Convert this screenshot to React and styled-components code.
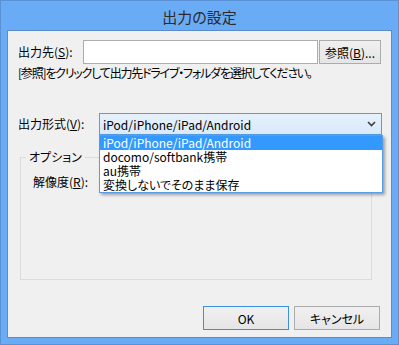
import React from 'react';
import styled, { createGlobalStyle } from 'styled-components';

const GlobalStyle = createGlobalStyle`
    html, body {
        margin: 0;
        padding: 0;
        background: #6aabf5;
    }
    body {
        font-family: "Noto Sans CJK JP", "Noto Sans", sans-serif;
        font-size: 12px;
        font-feature-settings: "palt";
        color: #000;
    }
`

const Frame = styled.div`
    width: 399px;
    height: 345px;
    box-sizing: border-box;
    border: 1px solid #5a91d4;
    background: #6aabf5;
    display: flex;
    flex-direction: column;
`

const TitleBar = styled.div`
    height: 29px;
    box-sizing: border-box;
    padding-top: 2px;
    display: flex;
    align-items: center;
    justify-content: center;
    font-size: 15px;
    color: #2b2b2b;
`

const Client = styled.div`
    margin: 0 6px 6px;
    height: 308px;
    box-sizing: border-box;
    border: 1px solid #5a8ccc;
    background: #f0f0f0;
    display: flex;
    flex-direction: column;
    padding-top: 9px;
`

const Row = styled.div`
    display: flex;
    align-items: center;
    padding-left: ${props => props.indent || 10}px;
    margin-top: ${props => props.top || 0}px;
`

const Label = styled.span`
    width: ${props => props.width}px;
    flex-shrink: 0;
    line-height: 14px;
    white-space: nowrap;
`

const Key = styled.span`
    text-decoration: underline;
    text-underline-offset: 1px;
`

const TextInput = styled.div`
    width: 235px;
    height: 24px;
    box-sizing: border-box;
    background: #fff;
    border: 1px solid #abadb3;
`

const Button = styled.div`
    width: ${props => props.width}px;
    height: ${props => props.height || 24}px;
    box-sizing: border-box;
    border: 1px solid ${props => props.isDefault ? '#3c8fe6' : '#acacac'};
    background: linear-gradient(#f0f0f0, #e5e5e5);
    display: flex;
    align-items: center;
    justify-content: center;
    white-space: nowrap;
`

const BrowseButton = styled(Button)`
    margin-left: 1px;
`

const Help = styled.div`
    margin-top: 2px;
    padding-left: 10px;
    line-height: 14px;
    letter-spacing: -1.2px;
    white-space: nowrap;
`

const SelectWrap = styled.div`
    position: relative;
`

const Select = styled.div`
    width: ${props => props.width}px;
    height: 22px;
    box-sizing: border-box;
    border: 1px solid ${props => props.open ? '#569de5' : '#acacac'};
    background: ${props => props.open ? 'linear-gradient(#e6f1fc, #d9eafb)' : 'linear-gradient(#f0f0f0, #e5e5e5)'};
    display: flex;
    align-items: center;
    padding: 0 5px 0 3px;
    justify-content: space-between;
`

const DropList = styled.div`
    position: absolute;
    top: 100%;
    left: 0;
    width: 284px;
    box-sizing: border-box;
    border: 1px solid #569de5;
    background: #fff;
    box-shadow: 2px 2px 3px rgba(0, 0, 0, 0.35);
    z-index: 2;
`

const Item = styled.div`
    height: 14px;
    line-height: 14px;
    padding-left: 3px;
    white-space: nowrap;
    background: ${props => props.selected ? '#3399ff' : 'transparent'};
    color: ${props => props.selected ? '#fff' : '#000'};
`

const Group = styled.div`
    position: relative;
    margin: 22px 0 0 12px;
    width: 352px;
    height: 123px;
    box-sizing: border-box;
    border: 1px solid #dcdcdc;
    padding-top: 13px;
`

const GroupTitle = styled.span`
    position: absolute;
    top: -8px;
    left: 5px;
    padding: 0 3px;
    background: #f0f0f0;
    line-height: 14px;
`

const Footer = styled.div`
    margin-top: auto;
    display: flex;
    justify-content: flex-end;
    gap: 5px;
    padding: 0 11px 7px 0;
`

const Chevron = () => (
    <svg width="9" height="6" viewBox="0 0 9 6">
        <path d="M1 1 L4.5 4.5 L8 1" fill="none" stroke="#404040" strokeWidth="1.6" />
    </svg>
);

const formats = [
    'iPod/iPhone/iPad/Android',
    'docomo/softbank携帯',
    'au携帯',
    '変換しないでそのまま保存'
];

const App = () => {
    return (
        <>
            <GlobalStyle />
            <Frame>
                <TitleBar>出力の設定</TitleBar>
                <Client>
                    <Row>
                        <Label width={65}>出力先(<Key>S</Key>):</Label>
                        <TextInput />
                        <BrowseButton width={62}>参照(<Key>B</Key>)...</BrowseButton>
                    </Row>
                    <Help>[参照]をクリックして出力先ドライブ・フォルダを選択してください。</Help>
                    <Row top={33}>
                        <Label width={81}>出力形式(<Key>V</Key>):</Label>
                        <SelectWrap>
                            <Select width={283} open>
                                <span>{formats[0]}</span>
                                <Chevron />
                            </Select>
                            <DropList>
                                {formats.map((f, i) => (
                                    <Item key={f} selected={i === 0}>{f}</Item>
                                ))}
                            </DropList>
                        </SelectWrap>
                    </Row>
                    <Group>
                        <GroupTitle>オプション</GroupTitle>
                        <Row indent={12}>
                            <Label width={66}>解像度(<Key>R</Key>):</Label>
                            <Select width={200}>
                                <span></span>
                                <Chevron />
                            </Select>
                        </Row>
                    </Group>
                    <Footer>
                        <Button width={86} isDefault>OK</Button>
                        <Button width={86}>キャンセル</Button>
                    </Footer>
                </Client>
            </Frame>
        </>
    );
};

export default App;
